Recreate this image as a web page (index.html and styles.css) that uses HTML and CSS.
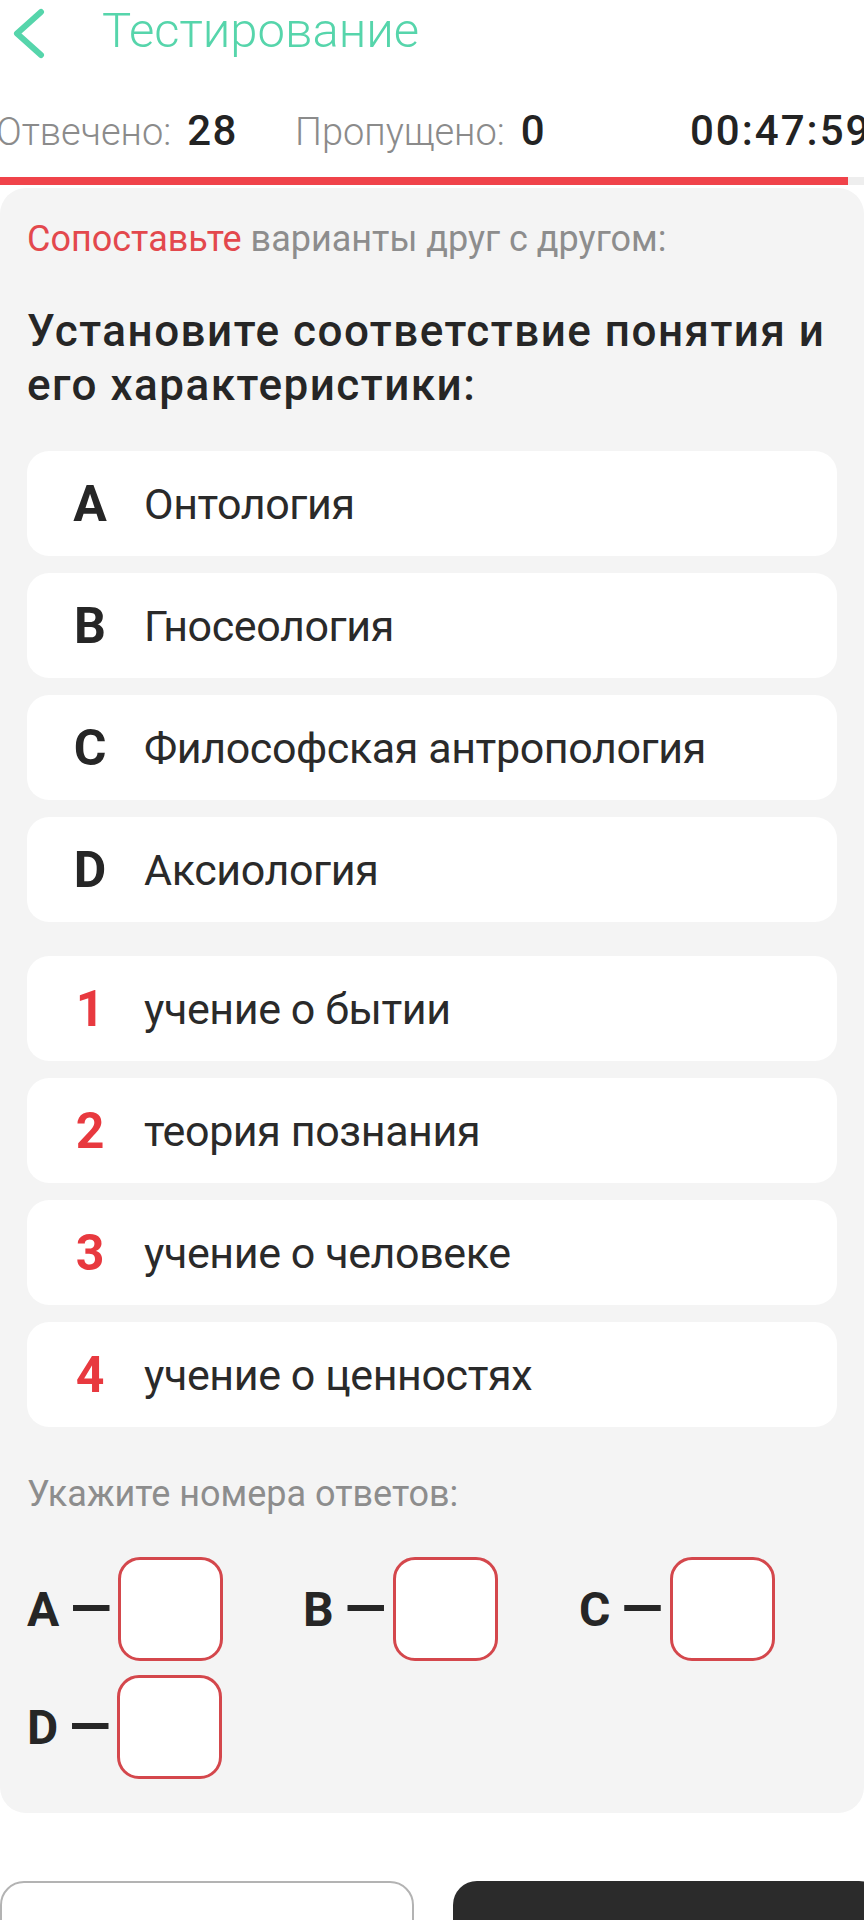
FILE: index.html
```html
<!DOCTYPE html>
<html lang="ru">
<head>
<meta charset="utf-8">
<title>Тестирование</title>
<link rel="stylesheet" href="styles.css">
</head>
<body>
<div class="app">
  <header class="topbar">
    <svg class="back" viewBox="0 0 34 52" aria-hidden="true">
      <path d="M28 4 L4 25.5 L28 47" fill="none" stroke="#56d5ab" stroke-width="6" stroke-linecap="round" stroke-linejoin="round"/>
    </svg>
    <h1 class="title">Тестирование</h1>
  </header>

  <div class="stats">
    <div class="stat"><span class="stat-label">Отвечено:</span><span class="stat-value">28</span></div>
    <div class="stat"><span class="stat-label">Пропущено:</span><span class="stat-value">0</span></div>
    <div class="timer">00:47:59</div>
  </div>

  <div class="progress"><div class="progress-fill" style="width: 98.15%"></div></div>

  <main class="card">
    <p class="instruction"><span class="accent">Сопоставьте</span> варианты друг с другом:</p>
    <h2 class="question">Установите соответствие понятия и<br>его характеристики:</h2>

    <ul class="options">
      <li class="option"><span class="option-key">A</span><span class="option-text">Онтология</span></li>
      <li class="option"><span class="option-key">B</span><span class="option-text">Гносеология</span></li>
      <li class="option"><span class="option-key">C</span><span class="option-text">Философская антропология</span></li>
      <li class="option"><span class="option-key">D</span><span class="option-text">Аксиология</span></li>
    </ul>

    <ul class="options options-second">
      <li class="option"><span class="option-key num">1</span><span class="option-text">учение о бытии</span></li>
      <li class="option"><span class="option-key num">2</span><span class="option-text">теория познания</span></li>
      <li class="option"><span class="option-key num">3</span><span class="option-text">учение о человеке</span></li>
      <li class="option"><span class="option-key num">4</span><span class="option-text">учение о ценностях</span></li>
    </ul>

    <p class="hint">Укажите номера ответов:</p>

    <div class="answers">
      <div class="answer"><span class="answer-key">A</span><span class="answer-dash">—</span><span class="answer-box"></span></div>
      <div class="answer"><span class="answer-key">B</span><span class="answer-dash">—</span><span class="answer-box"></span></div>
      <div class="answer"><span class="answer-key">C</span><span class="answer-dash">—</span><span class="answer-box"></span></div>
      <div class="answer"><span class="answer-key">D</span><span class="answer-dash">—</span><span class="answer-box"></span></div>
    </div>
  </main>

  <div class="actions">
    <button class="btn btn-secondary" type="button" aria-label="Пропустить"></button>
    <button class="btn btn-primary" type="button" aria-label="Ответить"></button>
  </div>
</div>
</body>
</html>
```

FILE: styles.css
```css
* { box-sizing: border-box; }

html, body {
  margin: 0;
  padding: 0;
  background: #ffffff;
  overflow-x: hidden;
}

body {
  font-family: Roboto, "Noto Sans", "Liberation Sans", sans-serif;
  color: #262626;
}

.app {
  width: 864px;
  height: 1920px;
  overflow: hidden;
}

/* Top bar */
.topbar {
  display: flex;
  align-items: flex-start;
  height: 61px;
}

.back {
  width: 34px;
  height: 52px;
  margin: 8px 0 0 13px;
  flex-shrink: 0;
}

.title {
  margin: 1px 0 0 55px;
  font-size: 49px;
  line-height: 60px;
  font-weight: 300;
  color: #56d5ab;
  white-space: nowrap;
}

/* Stats row */
.stats {
  display: grid;
  grid-template-columns: 299px 395px 300px;
  align-items: baseline;
  margin: 46px 0 0 -4px;
  line-height: 48px;
  white-space: nowrap;
}

.stat-label {
  font-size: 38px;
  font-weight: 300;
  color: #8b8b8b;
}

.stat-value {
  font-size: 42px;
  font-weight: 500;
  letter-spacing: 1.5px;
  color: #232323;
  margin-left: 16px;
}

.timer {
  font-size: 42px;
  font-weight: 500;
  color: #232323;
  letter-spacing: 2px;
}

/* Progress */
.progress {
  margin-top: 13px;
  height: 8px;
  background: #eeeeee;
}

.progress-fill {
  height: 100%;
  background: #f0434a;
}

/* Card */
.card {
  display: block;
  margin-top: 3px;
  background: #f4f4f4;
  border-radius: 26px;
  padding: 30px 27px 34px;
}

.instruction {
  margin: 0;
  font-size: 36px;
  line-height: 42px;
  color: #8d8d8d;
}

.accent { color: #e3484d; }

.question {
  margin: 44px 0 0;
  font-size: 44px;
  line-height: 54px;
  font-weight: 500;
  letter-spacing: 1.5px;
  color: #262626;
  white-space: nowrap;
}

.options {
  list-style: none;
  margin: 39px 0 0;
  padding: 0;
  display: flex;
  flex-direction: column;
  gap: 17px;
}

.options-second { margin-top: 34px; }

.option {
  height: 105px;
  background: #ffffff;
  border-radius: 22px;
  display: flex;
  align-items: center;
  padding-left: 40px;
}

.option-key {
  width: 46px;
  text-align: center;
  font-size: 50px;
  font-weight: 700;
  color: #262626;
}

.option-key.num { color: #e8393f; }

.option-text {
  margin-left: 31px;
  font-size: 43px;
  letter-spacing: -0.4px;
  color: #2a2a2a;
}

.hint {
  margin: 46px 0 0;
  font-size: 36px;
  line-height: 42px;
  color: #8d8d8d;
}

/* Answers */
.answers {
  margin-top: 42px;
  display: grid;
  grid-template-columns: repeat(3, 1fr);
  column-gap: 18px;
  row-gap: 14px;
}

.answer {
  display: flex;
  align-items: center;
}

.answer-key {
  font-size: 48px;
  font-weight: 700;
  color: #262626;
}

.answer-dash {
  font-size: 54px;
  line-height: 1;
  font-weight: 700;
  color: #262626;
  margin: 0 7px 0 11px;
}

.answer-box {
  width: 105px;
  height: 104px;
  border: 3px solid #d4474c;
  border-radius: 22px;
  background: #ffffff;
}

/* Bottom actions */
.actions {
  display: flex;
  gap: 39px;
  margin-top: 68px;
}

.btn {
  flex-shrink: 0;
  height: 110px;
  border-radius: 24px;
  padding: 0;
}

.btn-secondary {
  width: 414px;
  border: 2px solid #b3b3b3;
  background: #ffffff;
}

.btn-primary {
  width: 430px;
  border: 0;
  background: #2b2b2b;
}
```
